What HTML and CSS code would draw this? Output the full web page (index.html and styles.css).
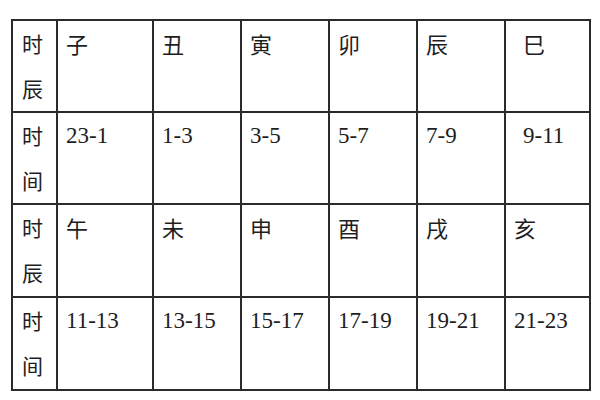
FILE: index.html
```html
<!DOCTYPE html>
<html lang="zh-CN">
<head>
<meta charset="utf-8">
<title>时辰</title>
<link rel="stylesheet" href="styles.css">
</head>
<body>
<table class="grid">
  <colgroup>
    <col class="c-head">
    <col class="c-wide">
    <col class="c-mid">
    <col class="c-mid">
    <col class="c-mid">
    <col class="c-mid">
    <col class="c-last">
  </colgroup>
  <tr class="r-a">
    <td class="head">时<br>辰</td>
    <td class="zh">子</td>
    <td class="zh">丑</td>
    <td class="zh">寅</td>
    <td class="zh">卯</td>
    <td class="zh">辰</td>
    <td class="zh indent">巳</td>
  </tr>
  <tr class="r-a">
    <td class="head">时<br>间</td>
    <td class="num">23-1</td>
    <td class="num">1-3</td>
    <td class="num">3-5</td>
    <td class="num">5-7</td>
    <td class="num">7-9</td>
    <td class="num indent">9-11</td>
  </tr>
  <tr class="r-b">
    <td class="head">时<br>辰</td>
    <td class="zh">午</td>
    <td class="zh">未</td>
    <td class="zh">申</td>
    <td class="zh">酉</td>
    <td class="zh">戌</td>
    <td class="zh">亥</td>
  </tr>
  <tr class="r-b">
    <td class="head">时<br>间</td>
    <td class="num">11-13</td>
    <td class="num">13-15</td>
    <td class="num">15-17</td>
    <td class="num">17-19</td>
    <td class="num">19-21</td>
    <td class="num">21-23</td>
  </tr>
</table>
</body>
</html>
```

FILE: styles.css
```css
html, body {
  margin: 0;
  padding: 0;
  background: #ffffff;
}

body {
  padding: 19px 0 0 11px;
  color: #1e1e1e;
  font-family: "Noto Sans CJK SC", "Noto Sans", sans-serif;
}

.grid {
  border-collapse: collapse;
  table-layout: fixed;
  width: 580px;
}

.grid td {
  border: 2px solid #2b2b2b;
  vertical-align: top;
  padding: 0 0 0 8px;
  line-height: 45px;
  font-size: 21px;
  text-align: left;
  overflow: hidden;
  white-space: nowrap;
}

.c-head { width: 45px; }
.c-wide { width: 96px; }
.c-mid { width: 88px; }
.c-last { width: 85px; }

.r-a td { height: 90px; }
.r-b td { height: 91px; }

.grid td.head {
  padding-left: 9px;
}

.grid td.zh {
  font-size: 22px;
}

.grid td.num {
  font-family: "Liberation Serif", "DejaVu Serif", serif;
  font-size: 23px;
}

.grid td.indent {
  padding-left: 17px;
}
```
